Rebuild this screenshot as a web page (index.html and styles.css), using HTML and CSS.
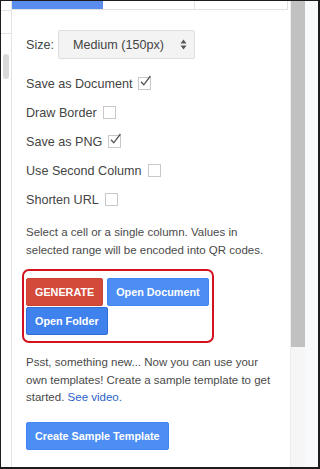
FILE: index.html
```html
<!DOCTYPE html>
<html>
<head>
<meta charset="utf-8">
<link rel="stylesheet" href="styles.css">
</head>
<body>
<div class="frame">
  <div class="sheet">
    <div class="grid-row r1"></div>
    <div class="grid-row r2"></div>
    <div class="sheet-thumb"></div>
  </div>
  <div class="panel">
    <div class="tabs">
      <div class="tab active"></div>
      <div class="tab"></div>
      <div class="tab last"></div>
    </div>
    <div class="content">
      <div class="size-row">
        <span class="label">Size:</span>
        <div class="select">
          <span>Medium (150px)</span>
          <svg class="arrows" width="7" height="11" viewBox="0 0 7 11"><path d="M3.5 0.5 L6.5 4.5 L0.5 4.5 Z M3.5 10.5 L0.5 6.5 L6.5 6.5 Z" fill="#555"/></svg>
        </div>
      </div>
      <div class="opt">Save as Document <span class="cb"><svg width="13" height="13" viewBox="0 0 13 13"><path d="M2 6.8 L4.8 9.8 L11.4 1" fill="none" stroke="#555" stroke-width="1.3"/></svg></span></div>
      <div class="opt">Draw Border <span class="cb"></span></div>
      <div class="opt">Save as PNG <span class="cb"><svg width="13" height="13" viewBox="0 0 13 13"><path d="M2 6.8 L4.8 9.8 L11.4 1" fill="none" stroke="#555" stroke-width="1.3"/></svg></span></div>
      <div class="opt">Use Second Column <span class="cb"></span></div>
      <div class="opt">Shorten URL <span class="cb"></span></div>
      <p class="note">Select a cell or a single column. Values in selected range will be encoded into QR codes.</p>
      <div class="highlight">
        <button class="btn red">GENERATE</button>
        <button class="btn blue">Open Document</button>
        <button class="btn blue dark">Open Folder</button>
      </div>
      <p class="note psst">Psst, something new... Now you can use your own templates! Create a sample template to get started. <a class="link">See video.</a></p>
      <button class="btn blue">Create Sample Template</button>
    </div>
  </div>
  <div class="scrollbar"><div class="thumb"></div></div>
  <div class="edge"></div>
</div>
</body>
</html>
```

FILE: styles.css
```css
html, body {
  margin: 0;
  padding: 0;
  background: #fff;
}
.frame {
  width: 320px;
  height: 469px;
  box-sizing: border-box;
  border: 1px solid #1c1c1c;
  border-right-width: 2px;
  border-bottom-width: 2px;
  display: flex;
  overflow: hidden;
  font-family: "Liberation Sans", Arial, sans-serif;
  color: #444;
}
.sheet {
  width: 10px;
  flex: none;
  background: #fff;
  display: flex;
  flex-direction: column;
}
.grid-row {
  border-bottom: 1px solid #e3e3e3;
}
.r1 { height: 9px; }
.r2 { height: 22px; }
.sheet-thumb {
  margin: 20px 0 0 2px;
  width: 6px;
  height: 25px;
  border-radius: 3px;
  background: #d9d9d9;
}
.panel {
  width: 278px;
  flex: none;
  border-left: 1px solid #e4e4e4;
  display: flex;
  flex-direction: column;
}
.tabs {
  display: flex;
  height: 8px;
  border-bottom: 1px solid #e2e2e2;
  margin-right: 2px;
}
.tab {
  width: 92px;
  border-right: 1px solid #e2e2e2;
}
.tab.active {
  width: 91px;
  background: #5b8def;
  border-right: none;
}
.tab.last {
  width: 92px;
}
.content {
  padding: 20px 0 0 14px;
}
.size-row {
  display: flex;
  align-items: center;
  height: 29px;
  font-size: 12.6px;
}
.label {
  width: 32px;
}
.select {
  width: 137px;
  height: 29px;
  box-sizing: border-box;
  background: #f3f3f3;
  border: 1px solid #dedede;
  border-radius: 2px;
  display: flex;
  align-items: center;
  padding-left: 14px;
  padding-right: 7px;
  justify-content: space-between;
  color: #444;
}
.arrows {
  display: block;
}
.opt {
  height: 29px;
  display: flex;
  align-items: center;
  font-size: 12.6px;
}
.size-row + .opt {
  margin-top: 10px;
}
.cb {
  width: 11px;
  height: 11px;
  border: 1px solid #c8c8c8;
  background: #fff;
  margin-left: 6px;
  position: relative;
}
.cb svg {
  position: absolute;
  left: 0;
  top: -3px;
}
.note {
  margin: 10px 0 0 0;
  font-size: 11.5px;
  line-height: 17.5px;
  width: 252px;
  color: #4a4a4a;
}
.highlight {
  margin: 10px 0 0 -4px;
  width: 186px;
  border: 2px solid #d3121f;
  border-radius: 7px;
  padding: 7px 0 6px 2px;
  display: flex;
  flex-wrap: wrap;
  column-gap: 4px;
  row-gap: 1px;
}
.btn {
  height: 28px;
  box-sizing: border-box;
  padding: 0 8px;
  border-radius: 2px;
  font-family: "Liberation Sans", Arial, sans-serif;
  font-size: 10.8px;
  font-weight: bold;
  color: #fff;
  border: 1px solid transparent;
  margin: 0;
}
.red {
  background: #d44a3a;
  border-color: #cc4232;
}
.blue {
  background: #4d8ef5;
  border-color: #4285f4;
}
.blue.dark {
  background: #3f82ee;
  border-color: #2f6fd6;
}
.psst {
  margin-top: 11px;
}
.link {
  color: #2a62c9;
}
.psst + .btn {
  margin-top: 15px;
  height: 28px;
}
.scrollbar {
  width: 14px;
  flex: none;
  background: #f6f6f6;
  border-left: 1px solid #ededed;
}
.thumb {
  height: 346px;
  background: #c1c1c1;
}
.edge {
  flex: 1;
  background: #f8f9fb;
}
```
